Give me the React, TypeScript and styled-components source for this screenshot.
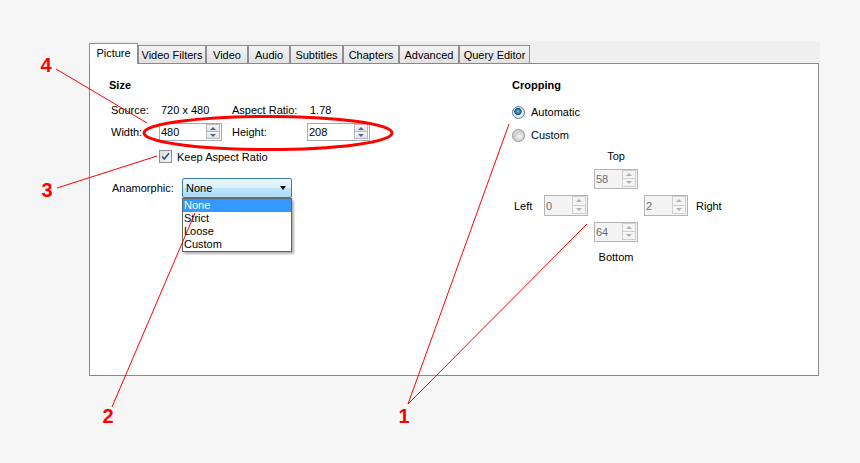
import styled, { createGlobalStyle } from 'styled-components';

const GlobalStyle = createGlobalStyle`
  html, body {
    margin: 0;
    padding: 0;
    background: #f6f6f6;
  }
  body {
    font-family: 'Liberation Sans', Arial, sans-serif;
    font-size: 11px;
    color: #000;
  }
`;

const tabs = [
  { label: 'Picture', w: 49, active: true },
  { label: 'Video Filters', w: 68 },
  { label: 'Video', w: 42 },
  { label: 'Audio', w: 42 },
  { label: 'Subtitles', w: 53 },
  { label: 'Chapters', w: 56 },
  { label: 'Advanced', w: 60 },
  { label: 'Query Editor', w: 71 },
];

const anamorphicOptions = ['None', 'Strict', 'Loose', 'Custom'];

const Spinner = ({
  value,
  w,
  h,
  disabled,
}: {
  value: string;
  w: number;
  h: number;
  disabled?: boolean;
}) => (
  <SpinBox $w={w} $h={h} $disabled={disabled}>
    <SpinText $disabled={disabled}>{value}</SpinText>
    <SpinButtons>
      <SpinButton $up $disabled={disabled} />
      <SpinButton $disabled={disabled} />
    </SpinButtons>
  </SpinBox>
);

const App = () => {
  return (
    <>
      <GlobalStyle />
      <Page>
        <TabStrip>
          {tabs.map((t) => (
            <Tab key={t.label} $w={t.w} $active={t.active}>
              {t.label}
            </Tab>
          ))}
        </TabStrip>
        <Panel>
          <Column>
            <SectionTitle>Size</SectionTitle>
            <InfoRow $mt={11} $h={14}>
              <span>Source:</span>
              <Value $indent={2}>720 x 480</Value>
              <span>Aspect Ratio:</span>
              <Value $indent={3}>1.78</Value>
            </InfoRow>
            <InfoRow $mt={6} $h={18}>
              <span>Width:</span>
              <Spinner value="480" w={63} h={18} />
              <span>Height:</span>
              <Spinner value="208" w={63} h={18} />
            </InfoRow>
            <CheckRow>
              <CheckBox>
                <svg width="11" height="11" viewBox="0 0 11 11">
                  <path d="M2 5.5 L4.3 8 L9 2.3" fill="none" stroke="#3b4f8a" strokeWidth="1.7" />
                </svg>
              </CheckBox>
              Keep Aspect Ratio
            </CheckRow>
            <SelectRow>
              <SelectLabel>Anamorphic:</SelectLabel>
              <SelectWrap>
                <Select>
                  None
                  <SelectArrow />
                </Select>
                <OptionList>
                  {anamorphicOptions.map((o, i) => (
                    <OptionItem key={o} $selected={i === 0}>
                      {o}
                    </OptionItem>
                  ))}
                </OptionList>
              </SelectWrap>
            </SelectRow>
          </Column>

          <Column>
            <SectionTitle>Cropping</SectionTitle>
            <RadioRow $mt={13}>
              <Radio $checked />
              Automatic
            </RadioRow>
            <RadioRow $mt={9}>
              <Radio />
              Custom
            </RadioRow>
            <CropGrid>
              <CropLabel style={{ gridArea: 'top' }} $center>
                Top
              </CropLabel>
              <CropCell style={{ gridArea: 'ts' }}>
                <Spinner value="58" w={44} h={20} disabled />
              </CropCell>
              <CropLabel style={{ gridArea: 'left' }}>Left</CropLabel>
              <CropCell style={{ gridArea: 'ls' }}>
                <Spinner value="0" w={44} h={21} disabled />
              </CropCell>
              <CropCell style={{ gridArea: 'rs' }}>
                <Spinner value="2" w={44} h={21} disabled />
              </CropCell>
              <CropLabel style={{ gridArea: 'right' }}>Right</CropLabel>
              <CropCell style={{ gridArea: 'bs' }}>
                <Spinner value="64" w={44} h={20} disabled />
              </CropCell>
              <CropLabel style={{ gridArea: 'bottom' }} $center $low>
                Bottom
              </CropLabel>
            </CropGrid>
          </Column>
        </Panel>

        <Annotations width="860" height="463" viewBox="0 0 860 463">
          <g stroke="#ff0000" strokeWidth="1" fill="none">
            <line x1="56" y1="69" x2="147" y2="123" />
            <line x1="57" y1="188" x2="157" y2="156" />
            <line x1="112" y1="407" x2="195" y2="213" />
            <line x1="408" y1="404" x2="509" y2="124" />
            <line x1="408" y1="404" x2="587" y2="224" />
            <ellipse cx="268" cy="133" rx="124" ry="16.5" strokeWidth="3" />
          </g>
          <g fill="#ff0000" fontFamily="'Liberation Sans', Arial, sans-serif" fontWeight="bold" fontSize="20" textAnchor="middle">
            <text x="46" y="72">4</text>
            <text x="47" y="197">3</text>
            <text x="108" y="423">2</text>
            <text x="404" y="423">1</text>
          </g>
        </Annotations>
      </Page>
    </>
  );
};

const Page = styled.div`
  position: relative;
  width: 860px;
  height: 463px;
  box-sizing: border-box;
  padding: 41px 0 0 89px;
  overflow: hidden;
`;

const TabStrip = styled.div`
  display: flex;
  align-items: flex-end;
  width: 731px;
  height: 22px;
  background: #efefef;
`;

const Tab = styled.div<{ $w: number; $active?: boolean }>`
  box-sizing: border-box;
  width: ${(p) => p.$w}px;
  height: ${(p) => (p.$active ? 21 : 18)}px;
  margin-bottom: ${(p) => (p.$active ? -1 : 0)}px;
  padding-bottom: ${(p) => (p.$active ? 3 : 0)}px;
  position: relative;
  z-index: ${(p) => (p.$active ? 2 : 1)};
  display: flex;
  align-items: center;
  justify-content: center;
  border: 1px solid #8c8e94;
  border-bottom: none;
  background: ${(p) => (p.$active ? '#fff' : 'linear-gradient(#f4f4f4, #e1e1e1)')};
  white-space: nowrap;
`;

const Panel = styled.div`
  box-sizing: border-box;
  width: 730px;
  height: 313px;
  border: 1px solid #898989;
  background: #fff;
  display: grid;
  grid-template-columns: 403px 1fr;
  align-items: start;
  padding: 14px 0 0 19px;
`;

const Column = styled.div`
  display: flex;
  flex-direction: column;
`;

const SectionTitle = styled.div`
  font-weight: bold;
  line-height: 14px;
  height: 14px;
`;

const InfoRow = styled.div<{ $mt: number; $h: number }>`
  display: grid;
  grid-template-columns: 48px 73px 75px auto;
  align-items: center;
  height: ${(p) => p.$h}px;
  margin-top: ${(p) => p.$mt}px;
  padding-left: 2px;
  line-height: 14px;
`;

const Value = styled.span<{ $indent: number }>`
  padding-left: ${(p) => p.$indent}px;
`;

const SpinBox = styled.div<{ $w: number; $h: number; $disabled?: boolean }>`
  box-sizing: border-box;
  width: ${(p) => p.$w}px;
  height: ${(p) => p.$h}px;
  display: flex;
  border: 1px solid ${(p) => (p.$disabled ? '#b4b4b4' : '#a9abb2')};
  background: ${(p) => (p.$disabled ? '#f4f4f4' : '#fff')};
`;

const SpinText = styled.div<{ $disabled?: boolean }>`
  flex: 1;
  display: flex;
  align-items: center;
  padding-left: 1px;
  color: ${(p) => (p.$disabled ? '#6d6d6d' : '#000')};
`;

const SpinButtons = styled.div`
  display: flex;
  flex-direction: column;
  width: 14px;
  margin: 0 1px 1px 0;
`;

const SpinButton = styled.div<{ $up?: boolean; $disabled?: boolean }>`
  flex: 1;
  box-sizing: border-box;
  display: flex;
  align-items: center;
  justify-content: center;
  border: 1px solid ${(p) => (p.$disabled ? '#cfcfcf' : '#b6b8bd')};
  border-top-width: ${(p) => (p.$up ? 1 : 0)}px;
  background: ${(p) => (p.$disabled ? '#f4f4f4' : 'linear-gradient(#f6f6f6, #e2e4e8)')};

  &::after {
    content: '';
    width: 0;
    height: 0;
    border-left: 3px solid transparent;
    border-right: 3px solid transparent;
    ${(p) => (p.$up ? 'border-bottom' : 'border-top')}: 3px solid
      ${(p) => (p.$disabled ? '#b0b0b0' : '#4e6591')};
  }
`;

const CheckRow = styled.div`
  display: flex;
  align-items: center;
  gap: 5px;
  height: 13px;
  margin-top: 9px;
  padding-left: 50px;
`;

const CheckBox = styled.div`
  box-sizing: border-box;
  width: 13px;
  height: 13px;
  border: 1px solid #8f8f8f;
  background: linear-gradient(135deg, #dcdcdc, #f7f7f7);
  display: flex;
  align-items: center;
  justify-content: center;
`;

const SelectRow = styled.div`
  display: flex;
  align-items: center;
  margin-top: 15px;
  padding-left: 3px;
`;

const SelectLabel = styled.span`
  width: 70px;
`;

const SelectWrap = styled.div`
  position: relative;
`;

const Select = styled.div`
  box-sizing: border-box;
  width: 110px;
  height: 20px;
  display: flex;
  align-items: center;
  padding-left: 3px;
  border: 1px solid #3c7fb1;
  border-radius: 2px;
  background: linear-gradient(#eaf6fd 0%, #d9f0fc 48%, #bee6fd 52%, #a9daf5 100%);
  position: relative;
`;

const SelectArrow = styled.span`
  position: absolute;
  right: 5px;
  top: 7px;
  width: 0;
  height: 0;
  border-left: 3.5px solid transparent;
  border-right: 3.5px solid transparent;
  border-top: 4px solid #000;
`;

const OptionList = styled.div`
  position: absolute;
  top: 100%;
  left: 0;
  box-sizing: border-box;
  width: 110px;
  border: 1px solid #646464;
  background: #fff;
  box-shadow: 2px 2px 2px rgba(0, 0, 0, 0.3);
  z-index: 3;
`;

const OptionItem = styled.div<{ $selected?: boolean }>`
  height: 13px;
  line-height: 13px;
  padding-left: 1px;
  background: ${(p) => (p.$selected ? '#3399ff' : 'transparent')};
  color: ${(p) => (p.$selected ? '#fff' : '#000')};
`;

const RadioRow = styled.div<{ $mt: number }>`
  display: flex;
  align-items: center;
  gap: 6px;
  height: 14px;
  margin-top: ${(p) => p.$mt}px;
`;

const Radio = styled.span<{ $checked?: boolean }>`
  box-sizing: border-box;
  width: 13px;
  height: 13px;
  border-radius: 50%;
  border: 1px solid ${(p) => (p.$checked ? '#5a7ea0' : '#8e8f8f')};
  background: ${(p) =>
    p.$checked
      ? 'radial-gradient(circle at 45% 40%, #6fc3ee 0, #1f6aa3 2.6px, #17507e 3.4px, #e0e0e0 3.9px, #f7f7f7 100%)'
      : 'radial-gradient(circle at 60% 60%, #f4f4f4 0, #e2e2e2 2.5px, #cfcfcf 5px, #ececec 100%)'};
`;

const CropGrid = styled.div`
  display: grid;
  grid-template-columns: 30px 44px 6px 44px 6px 44px 8px auto;
  grid-template-rows: 14px 20px 21px 20px 16px;
  grid-template-areas:
    '. . . top . . . .'
    '. . . ts . . . .'
    'left ls . . . rs . right'
    '. . . bs . . . .'
    '. . . bottom . . . .';
  row-gap: 6px;
  margin-top: 7px;
  padding-left: 2px;
`;

const CropCell = styled.div`
  display: flex;
`;

const CropLabel = styled.div<{ $center?: boolean; $low?: boolean }>`
  display: flex;
  align-items: ${(p) => (p.$low ? 'flex-end' : 'center')};
  justify-content: ${(p) => (p.$center ? 'center' : 'flex-start')};
  white-space: nowrap;
  line-height: 14px;
`;

const Annotations = styled.svg`
  position: absolute;
  left: 0;
  top: 0;
  pointer-events: none;
  z-index: 10;
`;

export default App;
